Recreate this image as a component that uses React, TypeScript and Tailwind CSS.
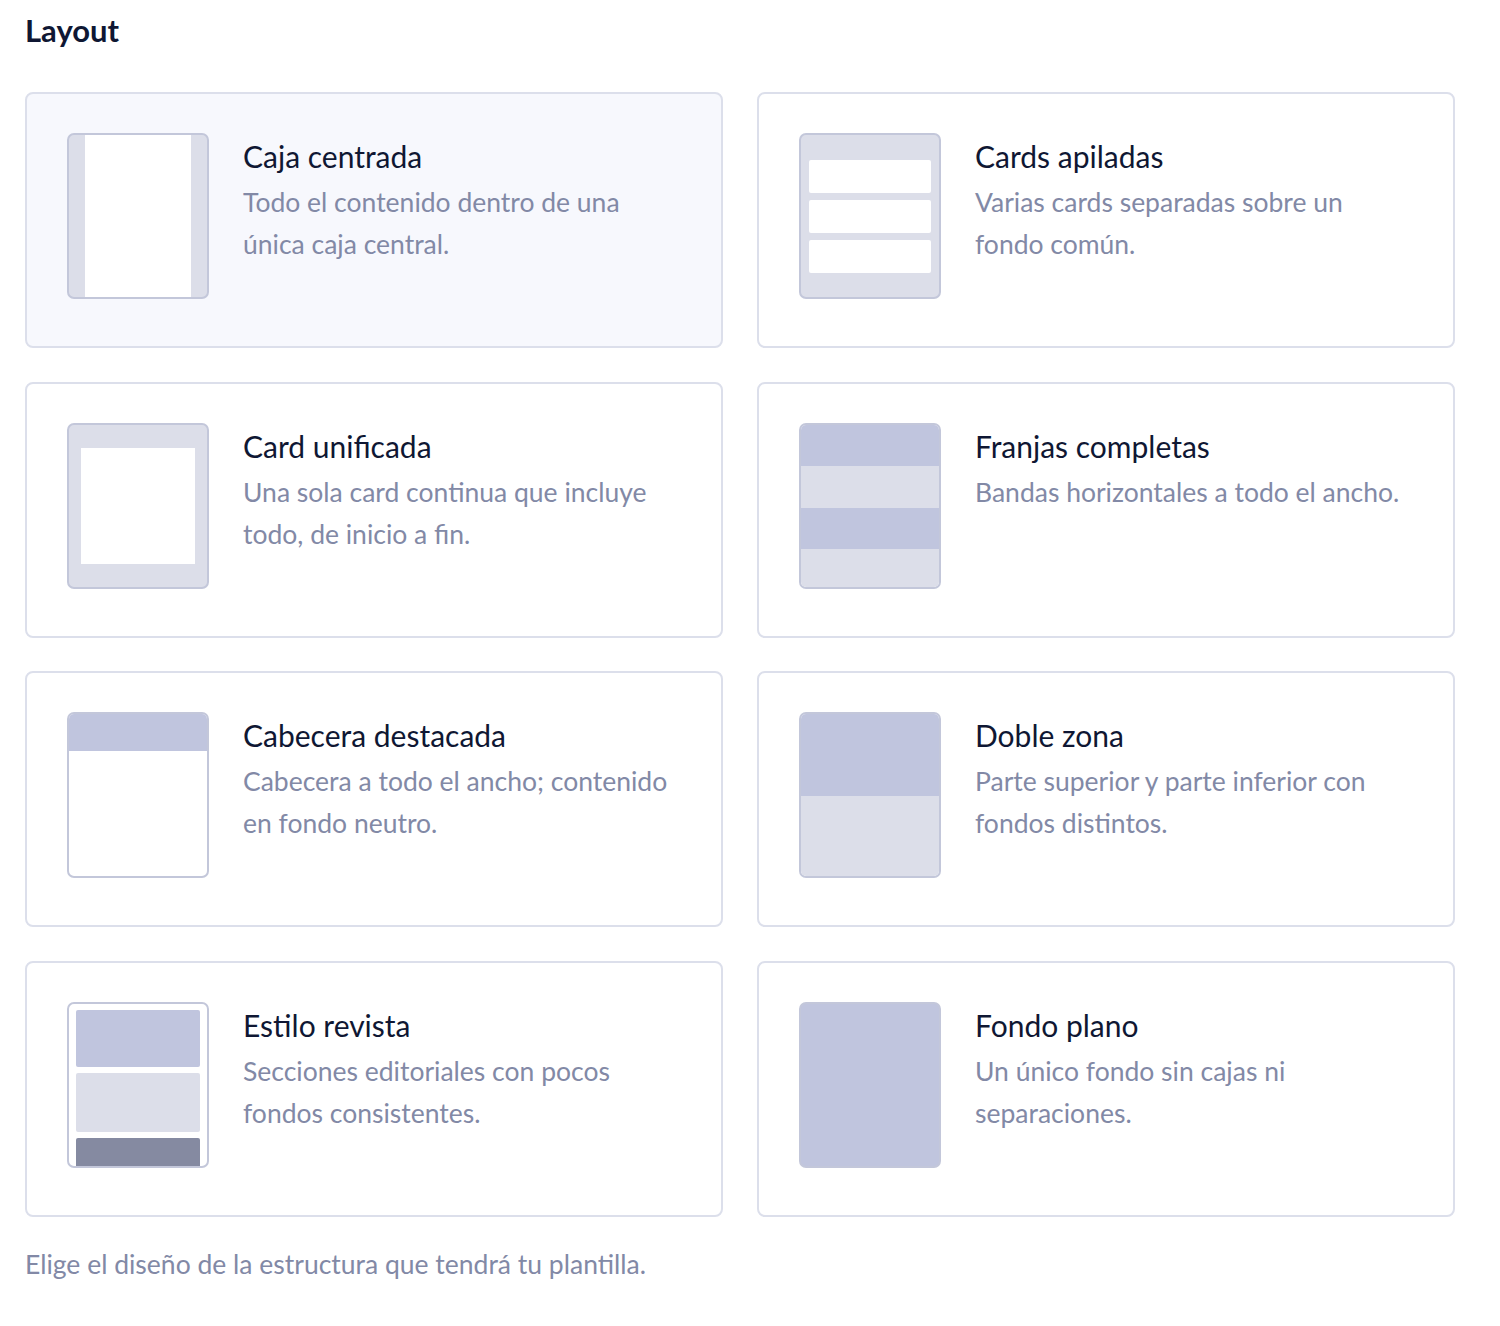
import React from "react";

type Option = {
    id: string;
    title: string;
    description: string;
    selected?: boolean;
};

const options: Option[] = [
    { id: "boxed", title: "Caja centrada", description: "Todo el contenido dentro de una única caja central.", selected: true },
    { id: "cards", title: "Cards apiladas", description: "Varias cards separadas sobre un fondo común." },
    { id: "unified", title: "Card unificada", description: "Una sola card continua que incluye todo, de inicio a fin." },
    { id: "stripes", title: "Franjas completas", description: "Bandas horizontales a todo el ancho." },
    { id: "header", title: "Cabecera destacada", description: "Cabecera a todo el ancho; contenido en fondo neutro." },
    { id: "split", title: "Doble zona", description: "Parte superior y parte inferior con fondos distintos." },
    { id: "magazine", title: "Estilo revista", description: "Secciones editoriales con pocos fondos consistentes." },
    { id: "flat", title: "Fondo plano", description: "Un único fondo sin cajas ni separaciones." },
];

function Thumb({ id }: { id: string }) {
    const frame = "h-[166px] w-[142px] shrink-0 overflow-hidden rounded-[7px] border-2 border-[#c3c7da]";

    switch (id) {
        case "boxed":
            return (
                <div className={`${frame} flex bg-[#dcdee9] px-[16px]`}>
                    <div className="flex-1 bg-white" />
                </div>
            );
        case "cards":
            return (
                <div className={`${frame} flex flex-col gap-[7px] bg-[#dcdee9] px-[8px] pt-[25px]`}>
                    <div className="h-[33px] rounded-[2px] bg-white" />
                    <div className="h-[33px] rounded-[2px] bg-white" />
                    <div className="h-[33px] rounded-[2px] bg-white" />
                </div>
            );
        case "unified":
            return (
                <div className={`${frame} flex bg-[#dcdee9] px-[12px] py-[23px]`}>
                    <div className="flex-1 bg-white" />
                </div>
            );
        case "stripes":
            return (
                <div className={`${frame} flex flex-col`}>
                    <div className="h-[41px] bg-[#c0c5de]" />
                    <div className="h-[42px] bg-[#dcdee9]" />
                    <div className="h-[41px] bg-[#c0c5de]" />
                    <div className="flex-1 bg-[#dcdee9]" />
                </div>
            );
        case "header":
            return (
                <div className={`${frame} flex flex-col bg-white`}>
                    <div className="h-[37px] bg-[#c0c5de]" />
                </div>
            );
        case "split":
            return (
                <div className={`${frame} flex flex-col`}>
                    <div className="h-[82px] bg-[#c0c5de]" />
                    <div className="flex-1 bg-[#dcdee9]" />
                </div>
            );
        case "magazine":
            return (
                <div className={`${frame} flex flex-col gap-[6px] bg-white px-[7px] pt-[6px]`}>
                    <div className="h-[57px] shrink-0 rounded-[2px] bg-[#c0c5de]" />
                    <div className="h-[59px] shrink-0 rounded-[2px] bg-[#dcdee9]" />
                    <div className="h-[40px] shrink-0 rounded-[2px] bg-[#858aa1]" />
                </div>
            );
        default:
            return <div className={`${frame} bg-[#c0c5de]`} />;
    }
}

function LayoutCard({ option }: { option: Option }) {
    return (
        <div
            className={`flex h-[256px] items-start gap-[34px] rounded-[8px] border-2 border-[#dcdfeb] pl-[40px] pt-[39px] ${
                option.selected ? "bg-[#f7f8fd]" : "bg-white"
            }`}
        >
            <Thumb id={option.id} />
            <div className="pr-[30px] pt-[3px]">
                <h3 className="text-[30px] leading-[40px] text-[#0f1733]">{option.title}</h3>
                <p className="mt-[5px] max-w-[432px] text-[26.5px] leading-[42px] text-[#8289a6]">{option.description}</p>
            </div>
        </div>
    );
}

export default function App() {
    return (
        <div className="min-h-[1326px] w-[1500px] bg-white px-[25px] pt-[10px]" style={{ fontFamily: "Lato, 'Noto Sans', sans-serif" }}>
            <h2 className="text-[31px] font-bold leading-[40px] text-[#0f1733]">Layout</h2>

            <div className="mt-[42px] grid w-[1430px] grid-cols-2 gap-x-[34px] gap-y-[33.5px]">
                {options.map((o) => (
                    <LayoutCard key={o.id} option={o} />
                ))}
            </div>

            <p className="mt-[27px] text-[26.5px] leading-[40px] text-[#8289a6]">
                Elige el diseño de la estructura que tendrá tu plantilla.
            </p>
        </div>
    );
}
